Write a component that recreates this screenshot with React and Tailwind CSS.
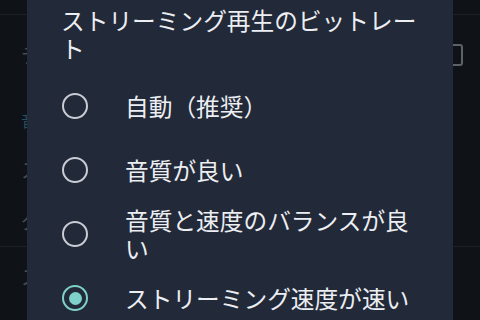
import React from 'react';

const options = [
  { label: '自動（推奨）', checked: false },
  { label: '音質が良い', checked: false },
  { label: '音質と速度のバランスが良い', checked: false },
  { label: 'ストリーミング速度が速い', checked: true },
];

const Radio = ({ checked }) => (
  <div
    className={`w-[26px] h-[26px] shrink-0 rounded-full border-[2.5px] flex items-center justify-center ${
      checked ? 'border-[#7fd0c8]' : 'border-[#c9ccd3]'
    }`}
  >
    {checked && <div className="w-[13px] h-[13px] rounded-full bg-[#7fd0c8]"></div>}
  </div>
);

export default function App() {
  return (
    <div
      className="relative w-[480px] h-[320px] overflow-hidden bg-[#0f1216]"
      style={{ fontFamily: '"Noto Sans CJK JP", "Noto Sans", sans-serif' }}
    >
      {/* Settings page behind the dialog */}
      <div className="flex flex-col text-[#474c54] text-[20px]">
        <div className="h-[15px] border-b border-[#1c2026]"></div>
        <div className="flex items-center justify-between pl-[21px] pr-[17px] h-[80px]">
          <span>データセーバー</span>
          <div className="w-[22px] h-[22px] border-2 border-[#5d6168] rounded-[3px]"></div>
        </div>
        <div className="pl-[21px] h-[50px] flex items-center text-[#284f60] text-[16px]">音質</div>
        <div className="pl-[21px] h-[50px] flex items-center">ストリーミング</div>
        <div className="pl-[21px] h-[52px] flex items-center border-b border-[#1c2026]">ダウンロード</div>
        <div className="pl-[21px] h-[60px] flex items-center">ストレージ</div>
      </div>

      {/* Dialog */}
      <div className="absolute left-[27px] top-0 w-[426px] h-[340px] bg-[#222939] text-[#eceef2]">
        <div className="pt-[6px] pl-[34px] pr-[24px] text-[23.7px] leading-[28px]">
          ストリーミング再生のビットレート
        </div>
        <div className="mt-[12px] flex flex-col">
          {options.map((o) => (
            <div key={o.label} className="min-h-[64px] flex items-center pl-[35px] pr-[24px] gap-[37px]">
              <Radio checked={o.checked} />
              <span className="text-[23.7px] leading-[28px]">{o.label}</span>
            </div>
          ))}
        </div>
      </div>
    </div>
  );
}
